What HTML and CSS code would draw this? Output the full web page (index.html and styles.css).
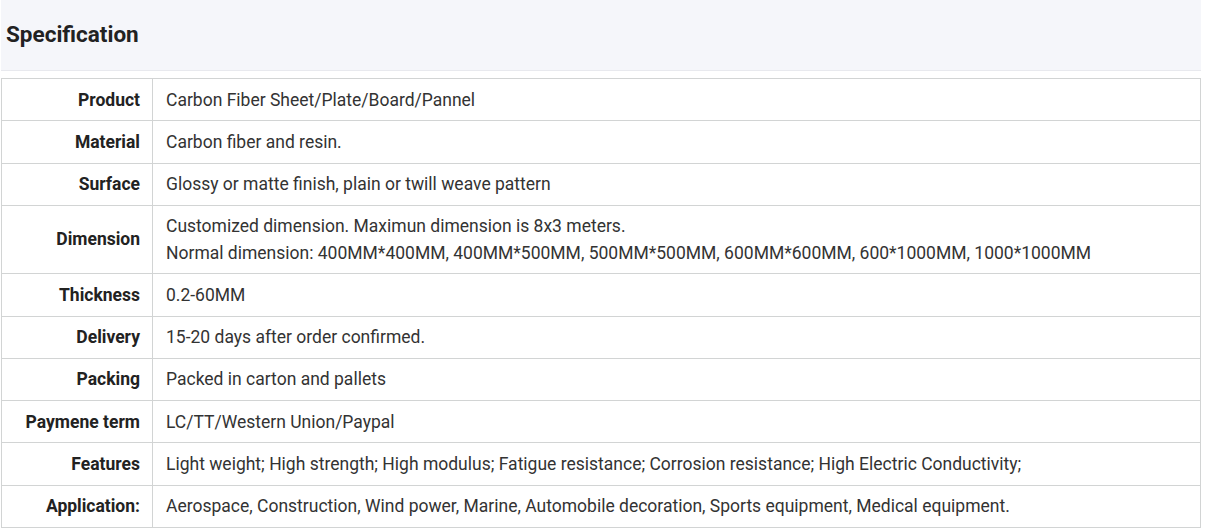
FILE: index.html
```html
<!DOCTYPE html>
<html>
<head>
<meta charset="utf-8">
<link rel="stylesheet" href="styles.css">
</head>
<body>
<div class="wrap">
  <div class="head"><h2 class="title">Specification</h2></div>
  <table class="spec">
    <tr><th>Product</th><td>Carbon Fiber Sheet/Plate/Board/Pannel</td></tr>
    <tr><th>Material</th><td>Carbon fiber and resin.</td></tr>
    <tr><th>Surface</th><td>Glossy or matte finish, plain or twill weave pattern</td></tr>
    <tr><th>Dimension</th><td>Customized dimension. Maximun dimension is 8x3 meters.<br>Normal dimension: 400MM*400MM, 400MM*500MM, 500MM*500MM, 600MM*600MM, 600*1000MM, 1000*1000MM</td></tr>
    <tr><th>Thickness</th><td>0.2-60MM</td></tr>
    <tr><th>Delivery</th><td>15-20 days after order confirmed.</td></tr>
    <tr><th>Packing</th><td>Packed in carton and pallets</td></tr>
    <tr><th>Paymene term</th><td>LC/TT/Western Union/Paypal</td></tr>
    <tr><th>Features</th><td>Light weight; High strength; High modulus; Fatigue resistance; Corrosion resistance; High Electric Conductivity;</td></tr>
    <tr><th>Application:</th><td>Aerospace, Construction, Wind power, Marine, Automobile decoration, Sports equipment, Medical equipment.</td></tr>
  </table>
</div>
</body>
</html>
```
FILE: styles.css
```css
html, body { margin: 0; padding: 0; background: #fff; }
body { font-family: Roboto, "Liberation Sans", Arial, sans-serif; color: #333; }
.wrap { width: 1200px; margin-left: 1px; }
.head {
  background: #f5f6fa;
  height: 70px;
  border-bottom: 1px solid #e8e9ee;
  display: flex;
  align-items: center;
  padding-left: 5px;
  padding-bottom: 2px;
  box-sizing: border-box;
  height: 71px;
}
.title { margin: 0; font-size: 22.5px; font-weight: 700; color: #222; }
.spec {
  margin-top: 7px;
  width: 1200px;
  border-collapse: collapse;
  font-size: 17.5px;
  line-height: 26.25px;
}
.spec th, .spec td {
  border: 1px solid #d2d4d4;
  padding: 7.5px 12px;
  vertical-align: middle;
}
.spec th {
  width: 126px;
  text-align: right;
  font-weight: 700;
  color: #222;
}
.spec td { text-align: left; font-weight: 400; color: #333; padding-left: 13px; }
```
